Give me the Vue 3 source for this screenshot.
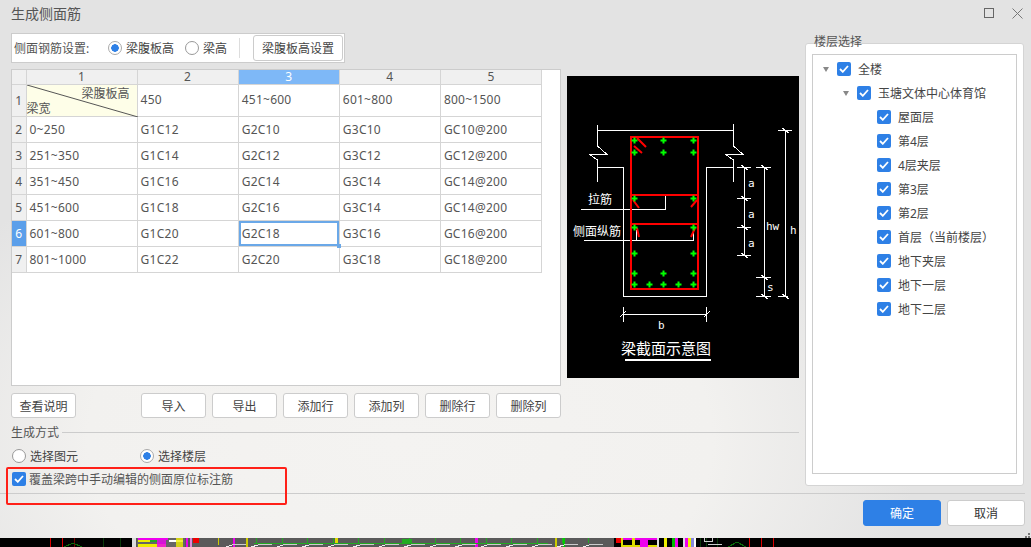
<script setup>
const cols = ['1', '2', '3', '4', '5']
const rows = [
  ['0~250', 'G1C12', 'G2C10', 'G3C10', 'GC10@200'],
  ['251~350', 'G1C14', 'G2C12', 'G3C12', 'GC12@200'],
  ['351~450', 'G1C16', 'G2C14', 'G3C14', 'GC14@200'],
  ['451~600', 'G1C18', 'G2C16', 'G3C14', 'GC14@200'],
  ['601~800', 'G1C20', 'G2C18', 'G3C16', 'GC16@200'],
  ['801~1000', 'G1C22', 'G2C20', 'G3C18', 'GC18@200'],
]
const actions = ['导入', '导出', '添加行', '添加列', '删除行', '删除列']
const floors = ['屋面层', '第4层', '4层夹层', '第3层', '第2层', '首层（当前楼层）', '地下夹层', '地下一层', '地下二层']
const dots = [
  [634.5, 140.5], [663.5, 140.5], [693.5, 140.5],
  [634.5, 152.5], [663.5, 152.5], [693.5, 152.5],
  [634.5, 198.5], [693.5, 198.5],
  [634.5, 227.5], [693.5, 227.5],
  [634.5, 253.5], [693.5, 253.5],
  [634.5, 273.5], [663.5, 273.5], [693.5, 273.5],
  [634.5, 284.5], [649.5, 284.5], [663.5, 284.5], [678.5, 284.5], [693.5, 284.5],
]
const whiteLines = [
  'M597.5 125V146L606.5 154H589L597.5 160V182',
  'M597.5 130.5H733.5',
  'M733.5 124V146L742.5 154H725L733.5 160V182',
  'M597.5 167.5H623.5V296.5H706.5V167.5H733.5',
  'M744.5 167V255M737 167.5H751M737 198.5H751M737 227.5H751M737 255.5H751',
  'M764.5 167V296M756 167.5H771M756 277.5H771M756 296.5H771',
  'M785.5 130V296M778 130.5H792M778 296.5H788',
  'M623.5 307V322M706.5 307V322M623 314.5H707',
  'M581 209.5H665.5V195',
  'M584 240.5H693.5V228M636.5 230V240',
  'M741 165L748 170M741 196L748 201M741 225L748 230M741 253L748 258M761 165L768 170M761 275L768 280M761 294L768 299M782 128L789 133M782 294L789 299M620 317L626 311M704 317L710 311',
]
const redHooks = 'M637 138L646 147M634 146L642 153M633 200L639 208M697 200L691 207M637 228L639 237M695 228L691 237'
const stripDashes = Array.from({ length: 15 }, (_, i) => 232 + i * 25.5)
const stripTicks = Array.from({ length: 14 }, (_, i) => 256 + i * 25.5)
</script>

<template>
  <div class="page">
    <div class="dialog">
      <header class="titlebar">
        <span class="title">生成侧面筋</span>
        <div class="winbtns">
          <svg width="10" height="10" viewBox="0 0 10 10"><rect x=".5" y=".5" width="9" height="9" fill="none" stroke="#666" /></svg>
          <svg width="11" height="11" viewBox="0 0 11 11"><path d="M.5.5l10 10M10.500.5l-10 10" fill="none" stroke="#777" /></svg>
        </div>
      </header>

      <div class="body">
        <div class="left">
          <div class="toolbar">
            <span class="tb-label">侧面钢筋设置:</span>
            <label class="opt"><i class="radio on"></i>梁腹板高</label>
            <label class="opt second"><i class="radio"></i>梁高</label>
            <i class="sep"></i>
            <button class="btn tb-btn">梁腹板高设置</button>
          </div>

          <div class="mid">
            <div class="tablebox">
              <table class="sheet">
                <colgroup>
                  <col class="c0" />
                  <col class="c1" />
                  <col class="cn" /><col class="cn" /><col class="cn" /><col class="cn" />
                </colgroup>
                <tbody>
                  <tr class="hr">
                    <th></th>
                    <th v-for="c in cols" :key="c" :class="{ selc: c === '3' }">{{ c }}</th>
                  </tr>
                  <tr class="r1">
                    <th>1</th>
                    <td class="diag">
                      <svg class="diagline" width="111" height="32" viewBox="0 0 111 32"><path d="M0 0L111 32" stroke="#555" fill="none" /></svg>
                      <span class="d-top">梁腹板高</span>
                      <span class="d-bot">梁宽</span>
                    </td>
                    <td>450</td><td>451~600</td><td>601~800</td><td>800~1500</td>
                  </tr>
                  <tr v-for="(r, i) in rows" :key="i" class="rn">
                    <th :class="{ selr: i === 4 }">{{ i + 2 }}</th>
                    <td v-for="(v, j) in r" :key="j" :class="{ active: i === 4 && j === 2 }">{{ v }}<i v-if="i === 4 && j === 2" class="handle"></i></td>
                  </tr>
                </tbody>
              </table>
            </div>

            <svg class="cad" width="232" height="302" viewBox="567 76 232 302">
              <rect x="567" y="76" width="232" height="302" fill="#000" />
              <g fill="none" stroke="#fff" shape-rendering="crispEdges">
                <path v-for="(d, i) in whiteLines" :key="i" :d="d" />
              </g>
              <g fill="none" stroke="#f00" stroke-width="2" shape-rendering="crispEdges">
                <rect x="631" y="137" width="67" height="151.5" />
                <path d="M631 195H698M631 224H698" />
              </g>
              <path :d="redHooks" fill="none" stroke="#f00" stroke-width="2" />
              <path v-for="(p, i) in dots" :key="i" :d="`M${p[0] - 1} ${p[1] - 3}h2v2h2v2h-2v2h-2v-2h-2v-2h2z`" fill="#0f0" />
              <g class="cad-text" fill="#fff">
                <text x="588" y="204" font-size="12">拉筋</text>
                <text x="573" y="236" font-size="12">侧面纵筋</text>
                <text x="621" y="354" font-size="15">梁截面示意图</text>
              </g>
              <g class="cad-letters" fill="#fff" font-size="11">
                <text x="748" y="187">a</text>
                <text x="748" y="218">a</text>
                <text x="748" y="247">a</text>
                <text x="766" y="230">hw</text>
                <text x="790" y="234">h</text>
                <text x="767" y="291">s</text>
                <text x="658" y="329">b</text>
              </g>
              <rect x="625" y="359" width="86" height="2" fill="#fff" />
            </svg>
          </div>

          <div class="actions">
            <button class="btn act">查看说明</button>
            <div class="act-group">
              <button v-for="a in actions" :key="a" class="btn act">{{ a }}</button>
            </div>
          </div>

          <div class="section-head">
            <span>生成方式</span><i class="rule"></i>
          </div>
          <div class="modes">
            <label class="opt mode1"><i class="radio"></i>选择图元</label>
            <label class="opt"><i class="radio on"></i>选择楼层</label>
          </div>
          <label class="opt cover">
            <i class="check"><svg width="10" height="8" viewBox="0 0 10 8"><path d="M1 4l2.800 2.800L9 1" fill="none" stroke="#fff" stroke-width="1.800" /></svg></i>
            覆盖梁跨中手动编辑的侧面原位标注筋
          </label>
        </div>

        <aside class="floors">
          <span class="legend">楼层选择</span>
          <div class="tree">
            <div class="node l0">
              <i class="arrow"></i>
              <i class="check"><svg width="10" height="8" viewBox="0 0 10 8"><path d="M1 4l2.800 2.800L9 1" fill="none" stroke="#fff" stroke-width="1.800" /></svg></i>
              <span>全楼</span>
            </div>
            <div class="node l1">
              <i class="arrow"></i>
              <i class="check"><svg width="10" height="8" viewBox="0 0 10 8"><path d="M1 4l2.800 2.800L9 1" fill="none" stroke="#fff" stroke-width="1.800" /></svg></i>
              <span>玉塘文体中心体育馆</span>
            </div>
            <div v-for="f in floors" :key="f" class="node l2">
              <i class="check"><svg width="10" height="8" viewBox="0 0 10 8"><path d="M1 4l2.800 2.800L9 1" fill="none" stroke="#fff" stroke-width="1.800" /></svg></i>
              <span>{{ f }}</span>
            </div>
          </div>
        </aside>
      </div>

      <footer class="footer">
        <button class="btn primary">确定</button>
        <button class="btn plain">取消</button>
        <svg class="grip" width="5" height="5" viewBox="0 0 5 5"><path d="M3 0h2v2H3zM0 3h2v2H0zM3 3h2v2H3z" fill="#777" /></svg>
      </footer>

      <i class="highlight"></i>
    </div>

    <svg class="strip" width="1031" height="9" viewBox="0 0 1031 9" shape-rendering="crispEdges">
      <rect width="1031" height="9" fill="#000" />
      <rect x="132" width="482" height="9" fill="#5a5a5a" />
      <rect x="132" width="4" height="9" fill="#ddd" />
      <path d="M50.500 0V9M62.500 0V9M749.500 0V9M761.500 0V9M773.500 0V9" stroke="#d00" fill="none" />
      <path d="M74.500 0V9" stroke="#700" fill="none" />
      <path d="M103.500 0V9M120.500 0V9M700.500 0V9M706.500 0V9M717.500 0V9" stroke="#0a3a0a" fill="none" />
      <path d="M64 9L73 5L82 9M728 9L737 4L746 9" stroke="#0a6a0a" fill="none" />
      <rect x="137" width="48" height="9" fill="#666" />
      <rect x="138" y="0" width="30" height="2" fill="#e0e" />
      <rect x="138" y="2" width="28" height="2" fill="#ee0" />
      <rect x="150" y="2" width="16" height="2" fill="#2a2" />
      <rect x="138" y="6" width="28" height="3" fill="#ee0" />
      <rect x="157" width="9" height="9" fill="#e0e" opacity=".85" />
      <rect x="169" y="2" width="14" height="2" fill="#fff" />
      <rect x="176" width="7" height="9" fill="#ee0" opacity=".8" />
      <rect x="186" width="2" height="9" fill="#e0e" />
      <rect x="190" width="2" height="9" fill="#d8d" />
      <rect x="193" y="0" width="6" height="5" fill="#e00" />
      <rect x="218" y="0" width="1" height="7" fill="#cc0" />
      <rect x="233" y="0" width="2" height="9" fill="#e0e" />
      <rect x="246" y="0" width="2" height="9" fill="#cc0" />
      <rect x="335" y="0" width="3" height="7" fill="#dd0" />
      <rect x="475" width="3" height="9" fill="#e0e" />
      <rect x="563" y="0" width="2" height="9" fill="#0c0" />
      <rect x="555" y="0" width="2" height="9" fill="#cc0" />
      <path d="M254 5H548" stroke="#22aa22" fill="none" />
      <rect x="402" y="1" width="10" height="4" fill="#22aa22" />
      <rect v-for="x in stripTicks" :key="'t' + x" :x="x" y="0" width="1" height="5" fill="#22aa22" />
      <rect v-for="x in stripDashes" :key="'d' + x" :x="x" y="6" width="14" height="1" fill="#ccc" />
      <path v-for="x in stripDashes" :key="'s' + x" :d="`M${x - 6} 9L${x} 7`" stroke="#eee" fill="none" />
      <rect x="616" y="0" width="5" height="5" fill="#e00" />
      <rect x="621" y="0" width="36" height="2" fill="#e0e" />
      <rect x="621" y="7" width="36" height="2" fill="#dd0" />
      <rect x="621" width="2" height="9" fill="#dd0" />
      <rect x="632" width="3" height="9" fill="#dd0" />
      <rect x="640" width="8" height="9" fill="#e0e" />
      <rect x="657" width="2" height="9" fill="#ddd" />
      <rect x="664" width="3" height="9" fill="#ee0" />
      <rect x="672" width="3" height="9" fill="#0b0" />
      <rect x="675" width="3" height="9" fill="#e0e" />
      <rect x="683" width="2" height="9" fill="#ddd" />
      <rect x="685" width="3" height="9" fill="#e0e" />
      <rect x="688" width="3" height="9" fill="#ee0" />
      <rect x="691" width="3" height="9" fill="#88d" />
      <rect x="694" width="2" height="9" fill="#fff" />
      <path d="M704 0V3H712V0M708 6H722" stroke="#ccc" fill="none" />
    </svg>
  </div>
</template>

<style>
html, body { margin: 0; background: #000; }
</style>

<style scoped>
.page {
  width: 1031px;
  height: 547px;
  overflow: hidden;
  font-family: "Noto Sans", "Noto Sans CJK SC", sans-serif;
  font-size: 12px;
  color: #444;
}
.dialog {
  position: relative;
  height: 538px;
  display: flex;
  flex-direction: column;
  background:
    radial-gradient(ellipse 520px 340px at 400px 440px, #f4f3f1 0%, #f2f1ef 60%, rgba(242, 241, 239, 0) 100%),
    #e3e3e3;
}
.titlebar {
  height: 33px;
  flex: none;
  display: flex;
  justify-content: space-between;
  padding: 0 8px 7px 11px;
  box-sizing: border-box;
  align-items: center;
}
.title { font-size: 14px; color: #555; }
.winbtns { display: flex; align-items: center; gap: 18px; }
.body { display: flex; flex: none; height: 460px; }
.left { width: 788px; margin-left: 11px; flex: none; }
.toolbar {
  width: 334px;
  height: 30px;
  box-sizing: border-box;
  display: flex;
  align-items: center;
  padding-left: 2px;
  background: #fff;
  border: 1px solid #ccc;
}
.tb-label { width: 94px; flex: none; color: #555; }
.opt { display: flex; align-items: center; gap: 4px; color: #444; white-space: nowrap; }
.second { margin-left: 11px; }
.radio {
  width: 14px;
  height: 14px;
  box-sizing: border-box;
  border: 1px solid #999;
  border-radius: 50%;
  background: #fff;
  display: block;
  flex: none;
}
.radio.on { border-color: #aaa; background: radial-gradient(circle, #2e80e6 0 3.500px, #fff 4px); }
.sep { width: 1px; height: 20px; background: #ddd; margin: 0 13px 0 12px; flex: none; }
.btn {
  font: inherit;
  color: #444;
  background: #fff;
  border: 1px solid #ccc;
  border-radius: 3px;
  padding: 0;
  box-sizing: border-box;
}
.tb-btn { width: 90px; height: 26px; flex: none; }
.mid { display: flex; margin-top: 6px; gap: 6px; align-items: flex-start; }
.tablebox {
  width: 550px;
  height: 317px;
  box-sizing: border-box;
  flex: none;
  background: #fff;
  border: 1px solid #ccc;
}
.sheet { border-collapse: collapse; table-layout: fixed; width: 530px; letter-spacing: .25px; }
.c0 { width: 14px; }
.c1 { width: 111px; }
.cn { width: 101px; }
.sheet th, .sheet td {
  border: 1px solid #d5d5d5;
  padding: 0;
  font-weight: 400;
  white-space: nowrap;
  box-sizing: border-box;
}
.sheet th { background: #f0f0f0; text-align: center; color: #555; }
.sheet td { padding-left: 3px; color: #555; position: relative; }
.hr { height: 14px; }
.hr th { line-height: 13px; border-top: 0; }
.sheet tr th:first-child { border-left: 0; }
.r1 { height: 32px; }
.r1 td { padding-bottom: 2px; }
.rn { height: 26px; }
.sheet th.selc { background: #7eb8f7; color: #fff; }
.sheet th.selr { background: #5b9fea; color: #fff; }
.sheet td.diag { background: #fefee8; padding: 0; letter-spacing: 0; }
.diagline { position: absolute; left: 0; top: 0; }
.d-top { position: absolute; right: 7px; top: 0; line-height: 18px; }
.d-bot { position: absolute; left: 0; bottom: -2px; line-height: 18px; }
.sheet td.active { box-shadow: inset 0 0 0 2px #6aa8e8; }
.handle { position: absolute; right: -2px; bottom: -2px; width: 4px; height: 4px; background: #6aa8e8; }
.cad { display: block; margin-top: 7px; flex: none; }
.cad-text text { font-family: "Noto Sans CJK SC", sans-serif; }
.cad-letters text { font-family: "DejaVu Sans Mono", monospace; }
.actions { display: flex; margin-top: 7px; justify-content: space-between; width: 550px; }
.act-group { display: flex; gap: 6px; }
.act { width: 65px; height: 25px; }
.section-head { display: flex; align-items: center; gap: 3px; height: 18px; margin-top: 5px; color: #555; }
.rule { flex: 1; height: 1px; background: #ccc; }
.modes { display: flex; margin: 5px 0 0 1px; height: 20px; align-items: center; }
.mode1 { width: 128px; }
.cover { margin: 4px 0 0 1px; height: 18px; gap: 3px; color: #555; }
.check {
  width: 14px;
  height: 14px;
  flex: none;
  display: flex;
  align-items: center;
  justify-content: center;
  background: #2e80e6;
  border-radius: 2px;
}
.floors {
  position: relative;
  margin: 10px 0 0 6px;
  width: 219px;
  height: 443px;
  box-sizing: border-box;
  background: #fff;
  border: 1px solid #d4d4d4;
  border-radius: 3px;
  padding: 10px 6px 11px 6px;
}
.legend { position: absolute; left: 8px; top: -10px; line-height: 16px; color: #555; }
.tree {
  height: 100%;
  box-sizing: border-box;
  border: 1px solid #ccc;
  padding-top: 2px;
}
.node { height: 24px; display: flex; align-items: center; gap: 7px; color: #444; }
.l0 { padding-left: 10px; }
.l1 { padding-left: 30px; }
.l2 { padding-left: 64px; }
.arrow {
  width: 0;
  height: 0;
  border: 3.500px solid transparent;
  border-top: 5px solid #888;
  border-bottom: 0;
  flex: none;
  margin-right: 1px;
}
.footer {
  position: relative;
  flex: none;
  height: 45px;
  box-sizing: border-box;
  border-top: 1px solid #ccc;
  margin-right: 6px;
  padding-top: 6px;
  display: flex;
  justify-content: flex-end;
  gap: 6px;
}
.footer .btn { width: 78px; height: 26px; }
.primary { background: #2e80e6; border-color: #2e80e6; color: #fff; }
.plain { color: #333; }
.grip { position: absolute; right: -5px; bottom: 0; }
.highlight {
  position: absolute;
  left: 6px;
  top: 467px;
  width: 281px;
  height: 38px;
  box-sizing: border-box;
  border: 2px solid #ff2018;
  border-radius: 2px;
}
.strip { display: block; }
</style>
